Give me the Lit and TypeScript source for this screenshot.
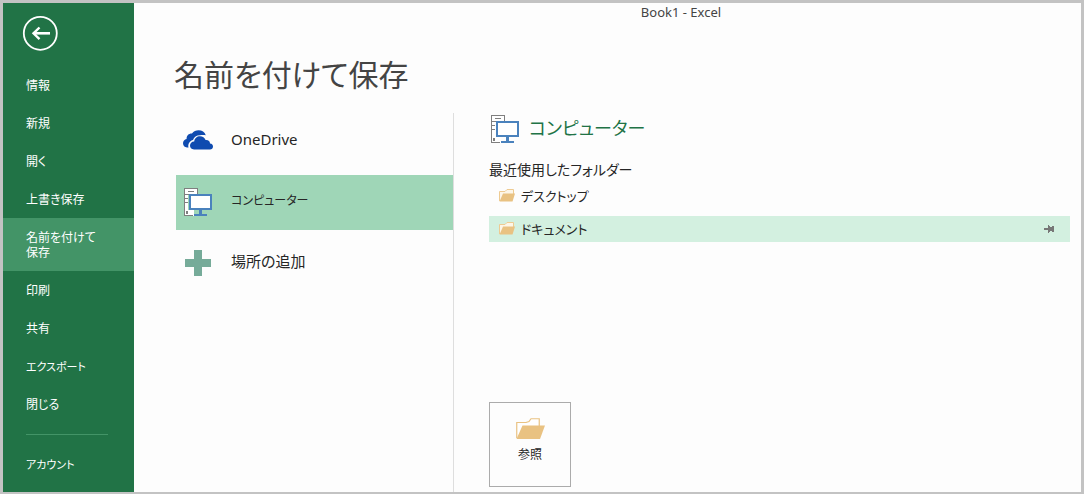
import { LitElement, html, css, svg } from "lit";
import { customElement, state } from "lit/decorators.js";
import { classMap } from "lit/directives/class-map.js";

const computerIcon = html`
  <svg width="28" height="28" viewBox="0 0 28 28" shape-rendering="crispEdges" aria-hidden="true">
    <path d="M0 0h14v6H4v16h6v6H0z" fill="#fff" />
    <path d="M0.5 27.5V0.5h13v5M0 27.5h9" fill="none" stroke="#7f7f7f" />
    <path d="M4 3h6v1H4zM1 6h4v1H1zM1 10h3v1H1zM1 14h3v1H1zM2 23h2v3H2z" fill="#7f7f7f" />
    <rect x="6" y="7" width="21" height="14" fill="#fff" />
    <path d="M5 6h23v16H5zM7 8v12h19V8z" fill="#4a82bd" fill-rule="evenodd" />
    <path d="M15 22h3v4h5v2H10v-2h5z" fill="#4a82bd" />
  </svg>
`;

const cloudIcon = html`
  <svg class="cloud" width="30" height="20" viewBox="1 1 30 20" aria-hidden="true">
    <path fill="#0f4bb0" d="M5.500 17.500H4C1.500 17.500 0 15.500 0 13.300C0 11 1.500 9.300 3.600 9C3.400 5.500 6 3.300 9 3.500C10.500 1.300 13 .3 15.600 .3C19 .3 21.700 2.200 22.800 5.200C20.500 4.800 18.500 5 17 5.200C13.500 5.300 11 7 10 10C7 10.500 4.500 14 5.500 17.500Z" />
    <path fill="#0f4bb0" d="M11 19.500C8.300 19.500 7 17.600 7 15.600C7 13.200 8.900 11.500 11.200 11.600C11.500 8.300 14 6.300 17 6.300C19.700 6.300 21.700 7.800 22.600 10.100C25.300 9.800 27 11.500 27 13.500C29 13.700 30 15 30 16.500C30 18.300 28.700 19.500 27 19.500Z" />
  </svg>
`;

const plusIcon = html`
  <svg width="28" height="28" viewBox="0 0 28 28" shape-rendering="crispEdges" aria-hidden="true">
    <path d="M10 1h8v9h9v8h-9v9h-8v-9H1v-8h9z" fill="#76ab99" />
  </svg>
`;

const largeFolder = svg`
  <path d="M1.750 20V4.500H11L14 3.500L16 .75H24.250V8" fill="#fff" stroke="#e9c282" stroke-width="1.200" />
  <path d="M7.500 7.500H30L25 21H1.500Z" fill="#e9c282" />
`;

const smallFolder = html`
  <svg width="16" height="14" viewBox="0 0 16 14" aria-hidden="true">
    <path d="M.5 12V2.500H6L8 .5H14.500V5" fill="#fdf6e8" stroke="#eecb92" />
    <path d="M4 4.500H16L13.500 12.500H.5Z" fill="#e9c282" />
  </svg>
`;

const pinIcon = html`
  <svg width="11" height="9" viewBox="0 0 11 9" shape-rendering="crispEdges" aria-hidden="true">
    <path d="M0 3h4V0h1v1h1v1h2V1h2v6H8V6H6v1H5v1H4V5H0z" fill="#777" />
  </svg>
`;

const isKana = (text: string) => /^[\u30a0-\u30ff]+$/.test(text);

@customElement("app-root")
export class AppRoot extends LitElement {
  @state() private command = "名前を付けて保存";
  @state() private place = "computer";

  private commands = ["情報", "新規", "開く", "上書き保存", "名前を付けて保存", "印刷", "共有", "エクスポート", "閉じる"];

  private places = [
    { id: "onedrive", label: "OneDrive", icon: cloudIcon },
    { id: "computer", label: "コンピューター", icon: computerIcon },
    { id: "add", label: "場所の追加", icon: plusIcon },
  ];

  static styles = css`
    :host {
      display: flex;
      box-sizing: border-box;
      min-height: 100vh;
      border: 3px solid #c3c3c3;
      border-bottom-width: 2px;
      background: #fdfdfd;
      color: #262626;
      font-family: "Noto Sans", "Noto Sans CJK JP", sans-serif;
      font-feature-settings: "palt";
      font-size: 15px;
      line-height: 20px;
    }
    * {
      box-sizing: border-box;
    }
    button {
      margin: 0;
      padding: 0;
      border: 0;
      background: none;
      color: inherit;
      font: inherit;
      font-feature-settings: inherit;
      text-align: left;
      cursor: pointer;
    }
    h1,
    h2,
    h3 {
      margin: 0;
      font-weight: 400;
    }
    svg {
      display: block;
      flex: none;
    }
    .cloud {
      overflow: visible;
    }
    .sidebar {
      flex: none;
      width: 131px;
      background: #217346;
      color: #fff;
      font-size: 12px;
      line-height: 15px;
    }
    .back {
      display: block;
      margin: 12px 0 15px 19px;
    }
    .command {
      display: flex;
      align-items: center;
      width: 100%;
      min-height: 38px;
      padding: 12px 36px 11px 23px;
    }
    .command.kana {
      font-size: 11px;
    }
    .command.current {
      background: #439467;
    }
    .rule {
      height: 1px;
      margin: 11px 26px 10px 23px;
      border: 0;
      background: #439467;
    }
    .main {
      flex: 1;
      min-width: 0;
      display: flex;
      flex-direction: column;
      padding: 0 11px 0 40px;
    }
    .title {
      padding-left: 118px;
      color: #444;
      font-size: 13px;
      line-height: 18px;
      text-align: center;
    }
    h1 {
      padding-top: 30px;
      color: #444;
      font-size: 30px;
      line-height: 48px;
    }
    .panes {
      flex: 1;
      display: flex;
      margin-top: 14px;
    }
    .places {
      flex: none;
      display: flex;
      flex-direction: column;
      gap: 6px;
      width: 280px;
      padding: 1px 0 0 2px;
      border-right: 1px solid #dedede;
    }
    .place {
      display: flex;
      align-items: center;
      width: 100%;
      height: 55px;
      padding: 0 8px 2px;
    }
    .place.current {
      background: #9fd6b7;
    }
    .slot {
      flex: none;
      width: 47px;
    }
    .label {
      padding-bottom: 4px;
    }
    .label.kana {
      padding-bottom: 2px;
      font-size: 12px;
    }
    .detail {
      flex: 1;
      min-width: 0;
      display: flex;
      flex-direction: column;
      padding: 0 0 5px 35px;
    }
    .heading {
      display: flex;
      align-items: center;
      gap: 10px;
      padding: 2px 0 0 2px;
      color: #217346;
      font-size: 18px;
      line-height: 24px;
    }
    .heading span {
      padding-bottom: 3px;
    }
    h3 {
      margin: 17px 0 3px;
      font-size: 14px;
      line-height: 20px;
    }
    .folders {
      display: flex;
      flex-direction: column;
      gap: 7px;
      font-size: 13px;
    }
    .folder {
      display: flex;
      align-items: center;
      gap: 6px;
      width: 100%;
      height: 26px;
      padding: 0 15px 0 10px;
    }
    .folder.current {
      background: #d3f0e0;
    }
    .folder span {
      flex: 1;
    }
    .browse {
      display: flex;
      flex-direction: column;
      align-items: center;
      gap: 5px;
      width: 82px;
      height: 85px;
      margin-top: auto;
      padding-top: 15px;
      border: 1px solid #ababab;
      font-size: 12px;
    }
  `;

  render() {
    return html`
      <nav class="sidebar">
        <button class="back" aria-label="戻る">
          <svg width="36" height="36" viewBox="0 0 36 36" fill="none" stroke="#fff" aria-hidden="true">
            <circle cx="18.300" cy="18.300" r="16.500" stroke-width="1.800" />
            <path d="M28 18.300H12" stroke-width="2.600" />
            <path d="M17.500 12.500L11.500 18.300L17.500 24.100" stroke-width="2.400" />
          </svg>
        </button>
        ${this.commands.map(
          (name) => html`
            <button
              class=${classMap({ command: true, kana: isKana(name), current: name === this.command })}
              @click=${() => (this.command = name)}
            >${name}</button>
          `
        )}
        <hr class="rule" />
        <button class="command kana">アカウント</button>
      </nav>
      <main class="main">
        <div class="title">Book1 - Excel</div>
        <h1>名前を付けて保存</h1>
        <div class="panes">
          <div class="places">
            ${this.places.map(
              (p) => html`
                <button
                  class=${classMap({ place: true, current: p.id === this.place })}
                  @click=${() => (this.place = p.id)}
                ><span class="slot">${p.icon}</span><span
                  class=${classMap({ label: true, kana: isKana(p.label) })}
                >${p.label}</span></button>
              `
            )}
          </div>
          <section class="detail">
            <h2 class="heading">${computerIcon}<span>コンピューター</span></h2>
            <h3>最近使用したフォルダー</h3>
            <div class="folders">
              <button class="folder">${smallFolder}<span>デスクトップ</span></button>
              <button class="folder current">${smallFolder}<span>ドキュメント</span>${pinIcon}</button>
            </div>
            <button class="browse">
              <svg width="30" height="22" viewBox="0 0 30 22" aria-hidden="true">${largeFolder}</svg>
              <span>参照</span>
            </button>
          </section>
        </div>
      </main>
    `;
  }
}
